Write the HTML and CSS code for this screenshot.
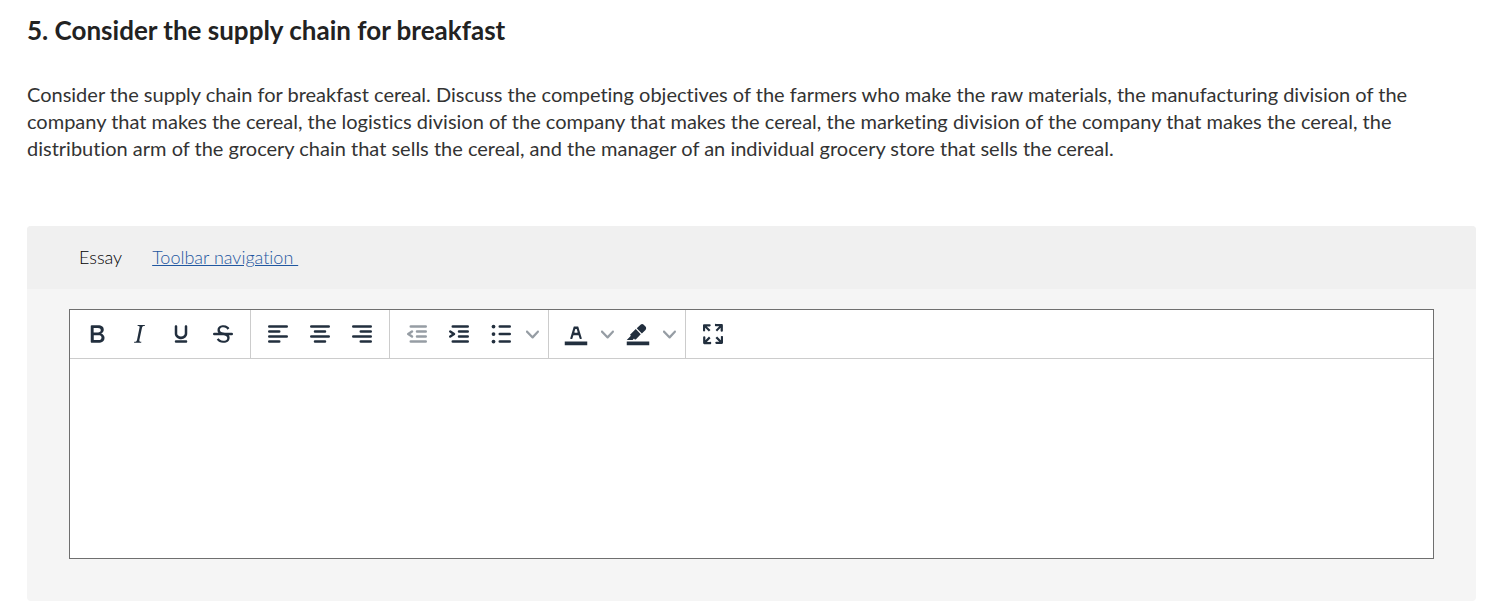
FILE: index.html
```
<!DOCTYPE html>
<html lang="en">
<head>
  <meta charset="UTF-8" />
  <meta name="viewport" content="width=device-width, initial-scale=1.0"/>
  <title>Consider the supply chain for breakfast</title>
  <link rel="stylesheet" href="styles.css">
</head>
<body>
  <main class="question">
    <h1>5. Consider the supply chain for breakfast</h1>
    <p class="prompt">Consider the supply chain for breakfast cereal. Discuss the competing objectives of the farmers who make the raw materials, the manufacturing division of the company that makes the cereal, the logistics division of the company that makes the cereal, the marketing division of the company that makes the cereal, the distribution arm of the grocery chain that sells the cereal, and the manager of an individual grocery store that sells the cereal.</p>

    <section class="panel">
      <div class="panel-header">
        <label for="essay">Essay</label>
        <a href="#toolbar">Toolbar navigation&nbsp;</a>
      </div>

      <div class="panel-body">
        <div class="editor">
          <div class="toolbar" id="toolbar" role="toolbar">
            <div class="group">
              <button type="button" class="tool" aria-label="Bold">
                <svg class="icon" viewBox="0 0 24 24"><path fill-rule="evenodd" d="M7.8 19c-.3 0-.5 0-.6-.2l-.2-.5V5.7c0-.2 0-.4.2-.5l.6-.2h5c1.5 0 2.7.3 3.5 1 .7.6 1.1 1.4 1.1 2.5a3 3 0 0 1-.6 1.9c-.4.6-1 1-1.6 1.2.4.1.9.3 1.3.6s.8.7 1 1.2c.4.4.5 1 .5 1.6 0 1.3-.4 2.3-1.3 3-.8.7-2.1 1-3.8 1H7.8zm5-8.3c.6 0 1.2-.1 1.6-.5.4-.3.6-.7.6-1.3 0-1.1-.8-1.7-2.3-1.7H9.3v3.5h3.4zm.5 6c.7 0 1.3-.1 1.7-.4.4-.4.6-.9.6-1.5s-.2-1-.7-1.4c-.4-.3-1-.4-2-.4H9.4v3.8h4z"/></svg>
              </button>
              <button type="button" class="tool" aria-label="Italic">
                <svg class="icon" viewBox="0 0 24 24"><path d="M16.7 4.7l-.1.9h-.3c-.6 0-1 0-1.4.3-.3.3-.4.6-.5 1.1l-2.1 9.8v.6c0 .5.4.8 1.4.8h.2l-.2.8H8l.2-.8h.2c1.1 0 1.8-.5 2-1.5l2-9.8.1-.5c0-.6-.4-.8-1.4-.8h-.3l.2-.9h5.8z"/></svg>
              </button>
              <button type="button" class="tool" aria-label="Underline">
                <svg class="icon" viewBox="0 0 24 24"><path d="M16 5c.6 0 1 .4 1 1v5.5a4 4 0 0 1-.4 1.8l-1 1.4a5.3 5.3 0 0 1-5.5 1 5 5 0 0 1-1.6-1c-.5-.4-.8-.9-1.1-1.4a4 4 0 0 1-.4-1.8V6c0-.6.4-1 1-1s1 .4 1 1v5.5c0 .3 0 .6.2 1l.6.7a3.3 3.3 0 0 0 2.2.8 3.4 3.4 0 0 0 2.2-.8c.3-.2.4-.5.6-.8l.2-.9V6c0-.6.4-1 1-1zM8 17h8c.6 0 1 .4 1 1s-.4 1-1 1H8a1 1 0 0 1 0-2z"/></svg>
              </button>
              <button type="button" class="tool" aria-label="Strikethrough">
                <svg class="icon" viewBox="0 0 24 24"><path d="M15.6 8.5c-.5-.7-1-1.1-1.3-1.3-.6-.4-1.3-.6-2-.6-2.7 0-2.8 1.7-2.8 2.1 0 1.6 1.8 2 3.2 2.3 4.4.9 4.6 2.8 4.6 3.9 0 1.4-.7 4.1-5 4.1A6.2 6.2 0 0 1 7 16.4l1.5-1.1c.4.6 1.6 2 3.7 2 1.6 0 2.5-.4 3-1.2.4-.8.3-2-.8-2.6-.7-.4-1.6-.7-2.9-1-1-.2-3.9-.8-3.9-3.6C7.6 6 10.3 5 12.4 5c2.9 0 4.2 1.6 4.7 2.4l-1.5 1.1z"/><path d="M5 11h14a1 1 0 0 1 0 2H5a1 1 0 0 1 0-2z"/></svg>
              </button>
            </div>

            <div class="group">
              <button type="button" class="tool" aria-label="Align left">
                <svg class="icon" viewBox="0 0 24 24"><path class="lines" d="M5 6h14M5 10h8M5 14h14M5 18h8"/></svg>
              </button>
              <button type="button" class="tool" aria-label="Align center">
                <svg class="icon" viewBox="0 0 24 24"><path class="lines" d="M5 6h14M8 10h8M5 14h14M8 18h8"/></svg>
              </button>
              <button type="button" class="tool" aria-label="Align right">
                <svg class="icon" viewBox="0 0 24 24"><path class="lines" d="M5 6h14M11 10h8M5 14h14M11 18h8"/></svg>
              </button>
            </div>

            <div class="group">
              <button type="button" class="tool" aria-label="Decrease indent" disabled>
                <svg class="icon" viewBox="0 0 24 24"><path class="lines" d="M7 6h12M12 10h7M12 14h7M7 18h12M8 10l-3 2 3 2"/></svg>
              </button>
              <button type="button" class="tool" aria-label="Increase indent">
                <svg class="icon" viewBox="0 0 24 24"><path class="lines" d="M7 6h12M12 10h7M12 14h7M7 18h12M5 10l3 2-3 2"/></svg>
              </button>
              <button type="button" class="tool" aria-label="Bullet list">
                <svg class="icon" viewBox="0 0 24 24"><circle cx="6" cy="6" r="1.5"/><circle cx="6" cy="12" r="1.5"/><circle cx="6" cy="18" r="1.5"/><path class="lines" d="M11 6h8M11 12h8M11 18h8"/></svg>
              </button>
              <button type="button" class="more" aria-label="List styles">
                <svg class="chevron" viewBox="0 0 10 10"><path d="M8.7 2.2c.3-.3.8-.3 1 0 .4.4.4.9 0 1.2L5.7 7.8c-.3.3-.9.3-1.2 0L.2 3.4a.8.8 0 0 1 0-1.2c.3-.3.8-.3 1.1 0L5 6l3.7-3.8z"/></svg>
              </button>
            </div>

            <div class="group">
              <button type="button" class="tool" aria-label="Text color">
                <svg class="icon" viewBox="0 0 24 24"><path d="M3 18h18v3H3z"/><path fill-rule="evenodd" d="M8.7 16h-.8a.5.5 0 0 1-.5-.6l2.7-9c.1-.3.3-.4.5-.4h2.8c.2 0 .4.1.5.4l2.7 9a.5.5 0 0 1-.5.6h-.8a.5.5 0 0 1-.4-.4l-.7-2.2c0-.3-.3-.4-.5-.4h-3.4c-.2 0-.4.1-.5.4l-.7 2.2c0 .3-.2.4-.4.4zm2.6-7.6l-.6 2a.5.5 0 0 0 .5.6h1.6a.5.5 0 0 0 .5-.6l-.6-2c0-.3-.3-.4-.5-.4h-.4c-.2 0-.4.1-.5.4z"/></svg>
              </button>
              <button type="button" class="more" aria-label="Text color options">
                <svg class="chevron" viewBox="0 0 10 10"><path d="M8.7 2.2c.3-.3.8-.3 1 0 .4.4.4.9 0 1.2L5.7 7.8c-.3.3-.9.3-1.2 0L.2 3.4a.8.8 0 0 1 0-1.2c.3-.3.8-.3 1.1 0L5 6l3.7-3.8z"/></svg>
              </button>
              <button type="button" class="tool" aria-label="Background color">
                <svg class="icon" viewBox="0 0 24 24"><path d="M3 18h18v3H3z"/><path d="M7.7 16.7H3l3.3-3.3-.7-.8L10.2 8l4 4.1-4 4.2c-.2.2-.6.2-.8 0l-.6-.7-1.1 1.1zm5-7.5L11 7.4l3-2.9a2 2 0 0 1 2.6 0L18 6c.7.7.7 2 0 2.7l-2.9 2.9-1.8-1.8-.5-.6z"/></svg>
              </button>
              <button type="button" class="more" aria-label="Background color options">
                <svg class="chevron" viewBox="0 0 10 10"><path d="M8.7 2.2c.3-.3.8-.3 1 0 .4.4.4.9 0 1.2L5.7 7.8c-.3.3-.9.3-1.2 0L.2 3.4a.8.8 0 0 1 0-1.2c.3-.3.8-.3 1.1 0L5 6l3.7-3.8z"/></svg>
              </button>
            </div>

            <div class="group">
              <button type="button" class="tool" aria-label="Fullscreen">
                <svg class="icon" viewBox="0 0 24 24"><path d="M15.3 10l-1.2-1.3 2.9-3h-2.3a.9.9 0 1 1 0-1.7H19c.5 0 .9.4.9.9v4.4a.9.9 0 1 1-1.8 0V7l-2.9 3zm0 4l3 3v-2.3a.9.9 0 1 1 1.7 0V19c0 .5-.4.9-.9.9h-4.4a.9.9 0 1 1 0-1.8H17l-3-2.9 1.3-1.2zM10 15.4l-2.9 3h2.3a.9.9 0 1 1 0 1.7H5a.9.9 0 0 1-.9-.9v-4.4a.9.9 0 1 1 1.8 0V17l2.9-3 1.2 1.3zM8.7 10L5.7 7v2.3a.9.9 0 0 1-1.7 0V5c0-.5.4-.9.9-.9h4.4a.9.9 0 0 1 0 1.8H7l3 2.9-1.3 1.2z"/></svg>
              </button>
            </div>
          </div>
          <textarea id="essay" name="essay"></textarea>
        </div>
      </div>
    </section>
  </main>
</body>
</html>
```
FILE: styles.css
```
* {
  box-sizing: border-box;
}

body {
  margin: 0;
  font-family: Lato, sans-serif;
  font-variant-ligatures: none;
  color: #222;
  background: #fff;
}

.question {
  padding: 14px 17px 0 27px;
}

h1 {
  margin: 0;
  font-size: 26px;
  line-height: 32px;
  font-weight: 700;
}

.prompt {
  margin: 35px 0 64px;
  padding-right: 48px;
  font-size: 20px;
  line-height: 27px;
  color: #333;
}

.panel {
  background: #f5f5f5;
  border-radius: 4px;
}

.panel-header {
  display: flex;
  align-items: center;
  gap: 30px;
  padding: 20px 52px;
  font-size: 18px;
  font-weight: 300;
  line-height: 23px;
  color: #000;
  background: #f0f0f0;
  border-radius: 4px 4px 0 0;
}

.panel-header a {
  color: #1f57a0;
}

.panel-body {
  padding: 20px 42px 42px;
}

.editor {
  background: #fff;
  border: 1px solid #6f6f6f;
}

.toolbar {
  display: flex;
  border-bottom: 1px solid #ccc;
}

.group {
  display: flex;
  padding: 0 6px;
  border-right: 1px solid #ccc;
}

.group:last-child {
  border-right: none;
}

.tool, .more {
  display: flex;
  align-items: center;
  justify-content: center;
  height: 48px;
  padding: 0;
  border: none;
  background: none;
  color: #222f3e;
  cursor: pointer;
}

.tool {
  width: 42px;
}

.more {
  width: 20px;
}

.tool:disabled, .more {
  color: #969da4;
}

.icon {
  width: 30px;
  height: 30px;
  fill: currentColor;
}

.lines {
  fill: none;
  stroke: currentColor;
  stroke-width: 2;
  stroke-linecap: round;
  stroke-linejoin: round;
}

.chevron {
  width: 13px;
  height: 13px;
  fill: currentColor;
}

textarea {
  display: block;
  width: 100%;
  height: 199px;
  padding: 12px;
  border: none;
  outline: none;
  resize: none;
  font: inherit;
}
```
